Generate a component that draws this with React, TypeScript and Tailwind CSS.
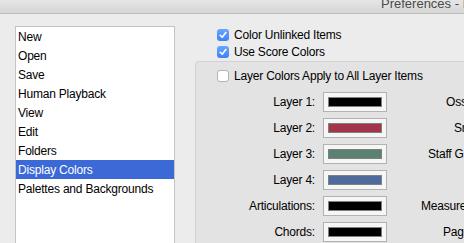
import React from "react";

const font = { fontFamily: '"Liberation Sans", Arial, sans-serif' };

const menuItems = [
  "New",
  "Open",
  "Save",
  "Human Playback",
  "View",
  "Edit",
  "Folders",
  "Display Colors",
  "Palettes and Backgrounds",
];

const colorRows = [
  { label: "Layer 1:", swatch: "bg-[#000000]", right: "Ossia Measures:", rightPad: "ml-[59px]" },
  { label: "Layer 2:", swatch: "bg-[#a2354a]", right: "Smart Shapes:", rightPad: "ml-[67px]" },
  { label: "Layer 3:", swatch: "bg-[#5b8270]", right: "Staff Groups:", rightPad: "ml-[41px]" },
  { label: "Layer 4:", swatch: "bg-[#4f6a9d]", right: "", rightPad: "ml-[40px]" },
  { label: "Articulations:", swatch: "bg-[#000000]", right: "Measure Numbers:", rightPad: "ml-[34px]" },
  { label: "Chords:", swatch: "bg-[#000000]", right: "Page Text:", rightPad: "ml-[56px]" },
];

function Checkbox({ checked }: { checked: boolean }) {
  if (!checked) {
    return (
      <div className="w-[12px] h-[12px] shrink-0 rounded-[3px] border border-[#b4b4b4] bg-white" />
    );
  }
  return (
    <div className="w-[12px] h-[12px] shrink-0 rounded-[3px] bg-gradient-to-b from-[#6aa6fa] to-[#3b82f6] flex items-center justify-center">
      <svg width="12" height="12" viewBox="0 0 12 12">
        <path d="M3.2 6.3 L5.2 8.3 L8.9 3.6" fill="none" stroke="white" strokeWidth="1.6" strokeLinecap="round" strokeLinejoin="round" />
      </svg>
    </div>
  );
}

function ColorWell({ swatch }: { swatch: string }) {
  return (
    <div className="w-[64px] h-[20px] shrink-0 border border-[#b2b2b2] bg-[#f6f6f6] flex items-center justify-center">
      <div className={`w-[54px] h-[10px] border border-[#7f7f7f] ${swatch}`} />
    </div>
  );
}

export default function App() {
  return (
    <div
      className="w-[464px] h-[243px] overflow-hidden bg-[#ececec] flex flex-col text-[12px] tracking-[-0.2px] text-black"
      style={font}
    >
      {/* Title bar */}
      <div className="h-[14px] shrink-0 overflow-hidden bg-gradient-to-b from-[#e6e6e6] to-[#d6d6d6] border-b border-[#bdbdbd]">
        <div className="pl-[381px] -mt-[3px] text-[13px] leading-[13px] tracking-normal text-[#4a4a4a] whitespace-nowrap">
          Preferences - Display Colors
        </div>
      </div>

      <div className="flex flex-1 min-h-0">
        {/* Category list */}
        <div className="ml-[15px] mt-[12px] w-[160px] shrink-0 h-[260px] bg-white border border-[#c4c4c4] flex flex-col">
          {menuItems.map((item) => (
            <div
              key={item}
              className={
                item === "Display Colors"
                  ? "h-[19px] flex items-center pl-[2px] bg-[#3b69d6] text-white whitespace-nowrap"
                  : "h-[19px] flex items-center pl-[2px] whitespace-nowrap"
              }
            >
              {item}
            </div>
          ))}
        </div>

        {/* Settings */}
        <div className="ml-[20px] flex-1 flex flex-col">
          <div className="pt-[15px] pl-[22px] flex flex-col gap-[5px]">
            <div className="h-[12px] flex items-center gap-[5px] whitespace-nowrap">
              <Checkbox checked />
              <span>Color Unlinked Items</span>
            </div>
            <div className="h-[12px] flex items-center gap-[5px] whitespace-nowrap">
              <Checkbox checked />
              <span>Use Score Colors</span>
            </div>
          </div>

          <div className="mt-[3px] flex-1 bg-[#e3e3e3] border-t border-l border-[#d2d2d2] rounded-tl-[4px] pt-[8px] pl-[21px]">
            <div className="h-[12px] flex items-center gap-[5px] whitespace-nowrap">
              <Checkbox checked={false} />
              <span>Layer Colors Apply to All Layer Items</span>
            </div>

            <div className="mt-[10px] flex flex-col gap-[6px]">
              {colorRows.map((row) => (
                <div key={row.label} className="h-[20px] flex items-center whitespace-nowrap">
                  <div className="w-[98px] shrink-0 text-right">{row.label}</div>
                  <div className="ml-[8px]">
                    <ColorWell swatch={row.swatch} />
                  </div>
                  <div className={`${row.rightPad} shrink-0`}>{row.right}</div>
                </div>
              ))}
            </div>
          </div>
        </div>
      </div>
    </div>
  );
}
